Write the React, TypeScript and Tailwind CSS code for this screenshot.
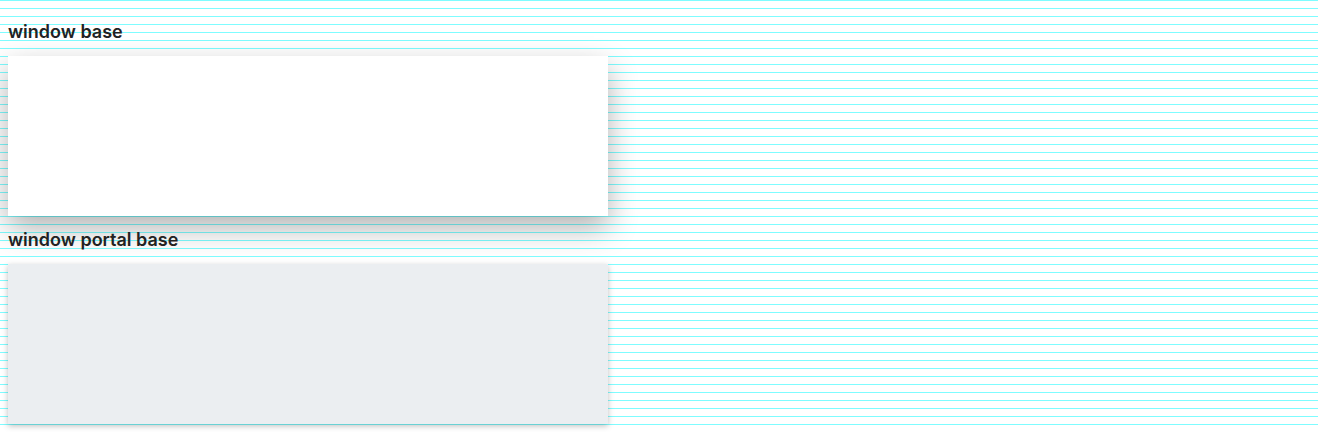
export default function App() {
  return (
    <div
      className="min-h-screen p-2 bg-white bg-[repeating-linear-gradient(to_bottom,#7ffcff_0px,#7ffcff_1px,transparent_1px,transparent_8px)]"
      style={{ fontFamily: "Inter, 'Liberation Sans', sans-serif" }}
    >
      <Section title="window base">
        <div className="w-[600px] h-40 bg-white shadow-[0_12px_28px_0_rgba(0,0,0,0.3)]" />
      </Section>
      <Section title="window portal base">
        <div className="w-[600px] h-40 bg-[#ebeef1] shadow-[0_2px_6px_rgba(0,0,0,0.25)]" />
      </Section>
    </div>
  );
}

function Section({ title, children }: { title: string; children: React.ReactNode }) {
  return (
    <div>
      <h2 className="my-3 h-6 leading-6 text-[18px] font-semibold text-[#222]">{title}</h2>
      {children}
    </div>
  );
}
